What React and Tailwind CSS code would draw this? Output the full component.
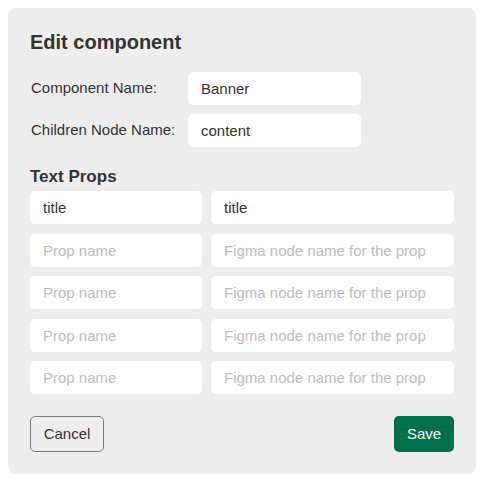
import React from "react";

function Field({ value, placeholder, className = "" }) {
  return (
    <input
      readOnly
      value={value || ""}
      placeholder={placeholder}
      className={
        "h-[33px] rounded-[5px] bg-white px-[13px] text-[15px] text-[#333] placeholder:text-[#bdbdbd] outline-none " +
        className
      }
    />
  );
}

export default function App() {
  const rows = [
    ["title", "title"],
    ["", ""],
    ["", ""],
    ["", ""],
    ["", ""],
  ];
  return (
    <div className="min-h-[481px] bg-white p-[8px] font-['Liberation_Sans',Arial,sans-serif] text-[#333]">
      <div className="w-[468px] rounded-[8px] bg-[#ededed] px-[22px] pt-[22px] pb-[22px]">
        <h2 className="text-[20px] font-bold leading-[24px] text-[#333]">Edit component</h2>
        <div className="mt-[18px] flex flex-col gap-[9px]">
          <div className="flex items-center">
            <label className="w-[158px] pl-[1px] text-[15px]">Component Name:</label>
            <Field value="Banner" className="w-[173px]" />
          </div>
          <div className="flex items-center">
            <label className="w-[158px] pl-[1px] text-[15px]">Children Node Name:</label>
            <Field value="content" className="w-[173px]" />
          </div>
        </div>
        <h3 className="mt-[20px] text-[17px] font-bold leading-[20px]">Text Props</h3>
        <div className="mt-[4px] flex flex-col gap-[9.5px]">
          {rows.map((r, i) => (
            <div key={i} className="flex gap-[9px]">
              <Field value={r[0]} placeholder="Prop name" className="w-[172px]" />
              <Field value={r[1]} placeholder="Figma node name for the prop" className="w-[244px]" />
            </div>
          ))}
        </div>
        <div className="mt-[22px] flex items-center justify-between">
          <button className="h-[36px] w-[74px] rounded-[5px] border border-[#7a7a7a] text-[15px] text-[#333]">
            Cancel
          </button>
          <button className="h-[36px] w-[60px] rounded-[5px] bg-[#00704a] text-[15px] text-white">
            Save
          </button>
        </div>
      </div>
    </div>
  );
}
